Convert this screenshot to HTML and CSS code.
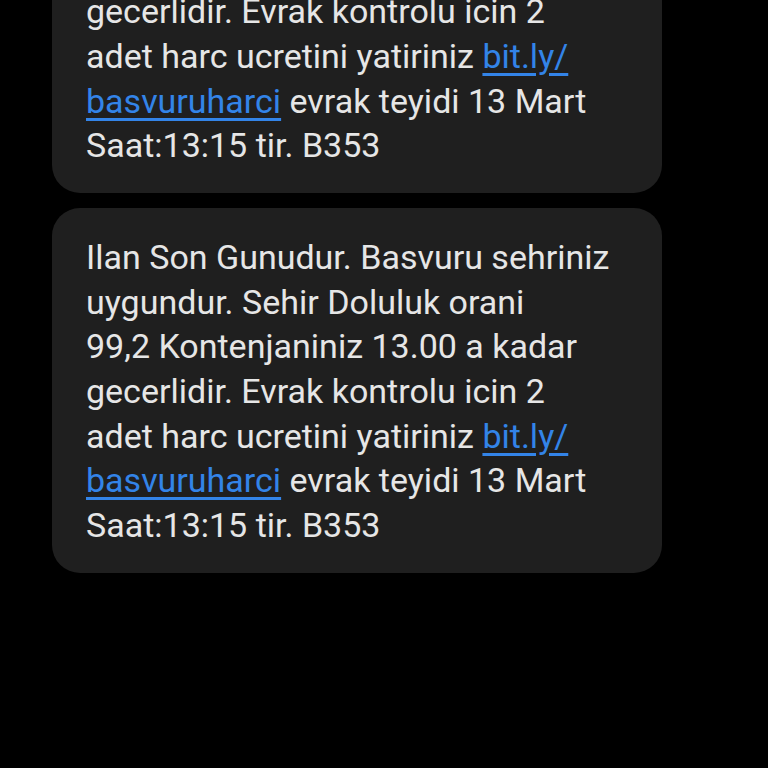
FILE: index.html
```html
<!DOCTYPE html>
<html>
<head>
<meta name="viewport" content="width=device-width, initial-scale=1">
<link rel="stylesheet" href="styles.css">
</head>
<body>

<div class="thread">
  <div class="bubble first">
    Ilan Son Gunudur. Basvuru sehriniz<br>
    uygundur. Sehir Doluluk orani<br>
    99,2 Kontenjaniniz 13.00 a kadar<br>
    gecerlidir. Evrak kontrolu icin 2<br>
    adet harc ucretini yatiriniz <a href="#">bit.ly/<br>basvuruharci</a> evrak teyidi 13 Mart<br>
    Saat:13:15 tir. B353
  </div>
  <div class="bubble">
    Ilan Son Gunudur. Basvuru sehriniz<br>
    uygundur. Sehir Doluluk orani<br>
    99,2 Kontenjaniniz 13.00 a kadar<br>
    gecerlidir. Evrak kontrolu icin 2<br>
    adet harc ucretini yatiriniz <a href="#">bit.ly/<br>basvuruharci</a> evrak teyidi 13 Mart<br>
    Saat:13:15 tir. B353
  </div>
</div>

</body>
</html>
```

FILE: styles.css
```css
* {box-sizing: border-box;}

body {
  margin: 0;
  background-color: #000;
  font-family: Roboto, "Noto Sans", sans-serif;
  overflow: hidden;
}

.thread {
  display: flex;
  flex-direction: column;
  gap: 15px;
  padding-left: 52px;
}

.bubble {
  width: 610px;
  padding: 27px 30px 25px 34px;
  background-color: #1f1f1f;
  border-radius: 28px;
  color: #e6e6e6;
  font-size: 34px;
  line-height: 44.7px;
  white-space: nowrap;
}

.bubble.first {
  margin-top: -172px;
}

.bubble a {
  color: #3384e8;
  text-decoration: underline;
  text-underline-offset: 5px;
}
```
